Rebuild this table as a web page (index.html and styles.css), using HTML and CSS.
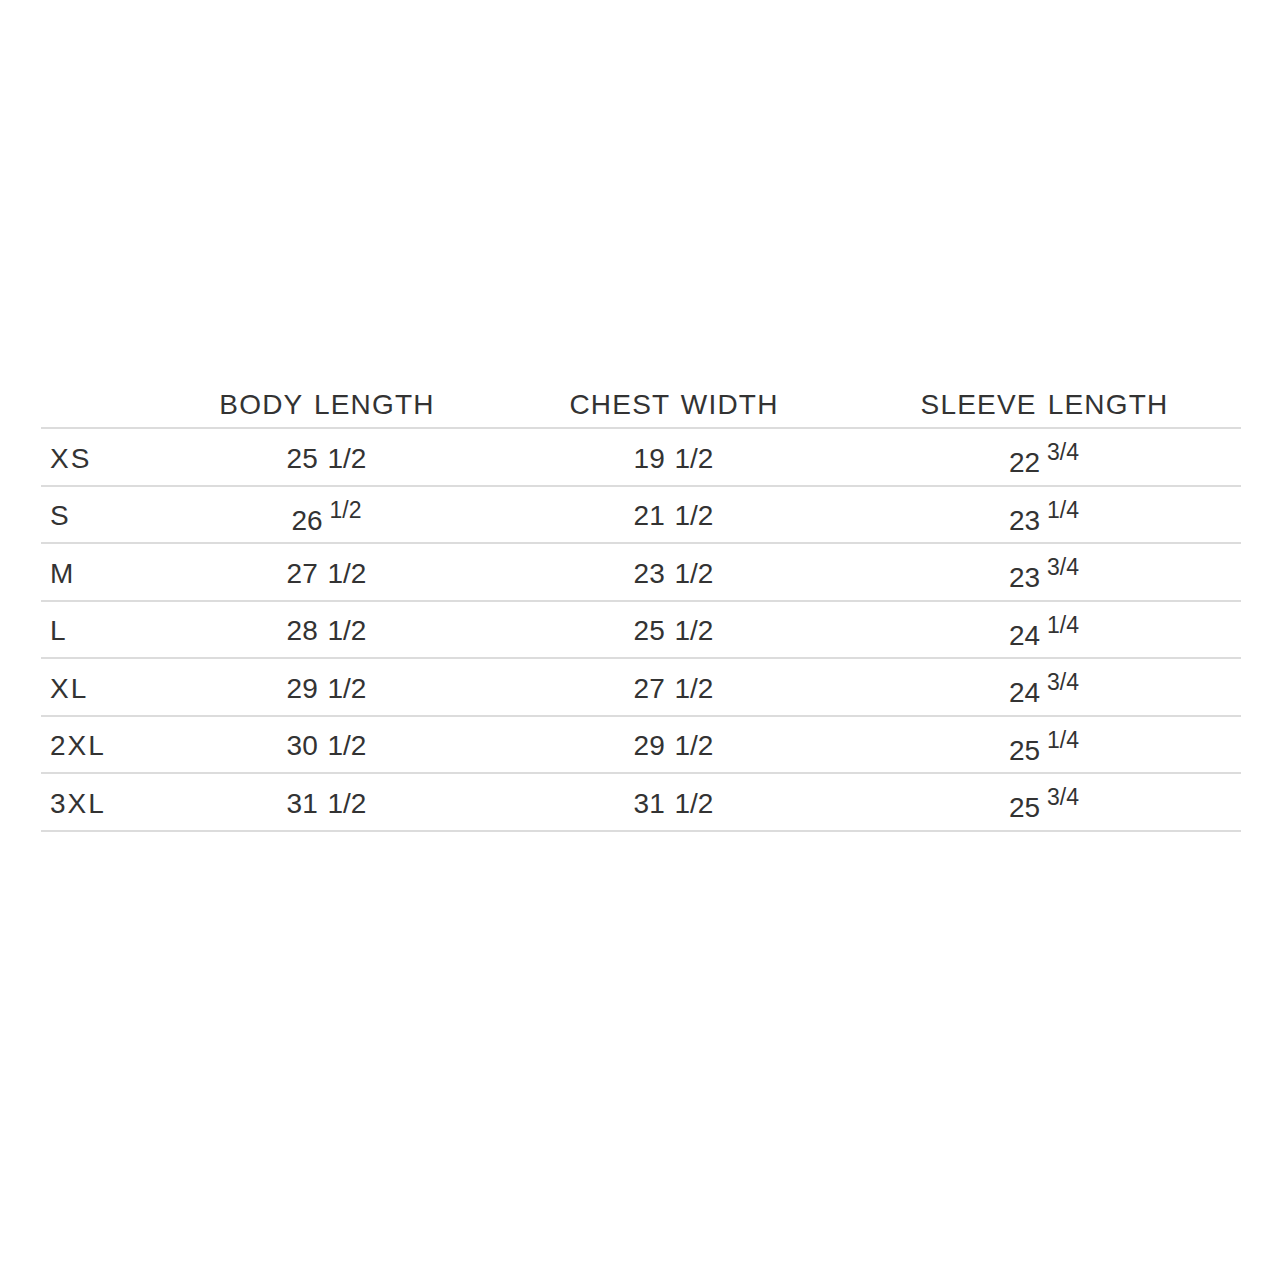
FILE: index.html
```html
<!DOCTYPE html>
<html>
<head>
<meta charset="utf-8">
<link rel="stylesheet" href="styles.css">
</head>
<body>
<div class="page">
  <div class="chart">
    <div class="row head">
      <div class="cell label"></div>
      <div class="cell">BODY LENGTH</div>
      <div class="cell">CHEST WIDTH</div>
      <div class="cell">SLEEVE LENGTH</div>
    </div>
    <div class="row">
      <div class="cell label">XS</div>
      <div class="cell">25 1/2</div>
      <div class="cell">19 1/2</div>
      <div class="cell fr">22<sup class="frac">3/4</sup></div>
    </div>
    <div class="row">
      <div class="cell label">S</div>
      <div class="cell fr">26<sup class="frac">1/2</sup></div>
      <div class="cell">21 1/2</div>
      <div class="cell fr">23<sup class="frac">1/4</sup></div>
    </div>
    <div class="row">
      <div class="cell label">M</div>
      <div class="cell">27 1/2</div>
      <div class="cell">23 1/2</div>
      <div class="cell fr">23<sup class="frac">3/4</sup></div>
    </div>
    <div class="row">
      <div class="cell label">L</div>
      <div class="cell">28 1/2</div>
      <div class="cell">25 1/2</div>
      <div class="cell fr">24<sup class="frac">1/4</sup></div>
    </div>
    <div class="row">
      <div class="cell label">XL</div>
      <div class="cell">29 1/2</div>
      <div class="cell">27 1/2</div>
      <div class="cell fr">24<sup class="frac">3/4</sup></div>
    </div>
    <div class="row">
      <div class="cell label">2XL</div>
      <div class="cell">30 1/2</div>
      <div class="cell">29 1/2</div>
      <div class="cell fr">25<sup class="frac">1/4</sup></div>
    </div>
    <div class="row">
      <div class="cell label">3XL</div>
      <div class="cell">31 1/2</div>
      <div class="cell">31 1/2</div>
      <div class="cell fr">25<sup class="frac">3/4</sup></div>
    </div>
  </div>
</div>
</body>
</html>
```
FILE: styles.css
```css
html, body {
  margin: 0;
  padding: 0;
  background: #ffffff;
}
body {
  font-family: "Liberation Sans", Arial, sans-serif;
  color: #333333;
}
.page {
  width: 1280px;
  height: 1280px;
  padding-top: 378px;
  box-sizing: border-box;
}
.chart {
  margin-left: 41px;
  width: 1200px;
}
.row {
  display: grid;
  grid-template-columns: 112px 347px 347px 394px;
  height: 57.5px;
  align-items: center;
  border-bottom: 2px solid #dcdcdc;
  box-sizing: border-box;
  font-size: 28px;
  line-height: 32px;
}
.row.head {
  height: 51px;
}
.row.head .cell {
  letter-spacing: 1.2px;
  padding-left: 1px;
  padding-top: 4px;
}
.cell {
  text-align: center;
  white-space: nowrap;
  word-spacing: 2px;
  padding-top: 4px;
}
.cell.fr {
  padding-top: 13px;
}
.cell.label {
  text-align: left;
  padding-left: 9px;
  letter-spacing: 2px;
}
.frac {
  font-size: 23px;
  margin-left: 7px;
  vertical-align: 12px;
  line-height: 0;
}
```
